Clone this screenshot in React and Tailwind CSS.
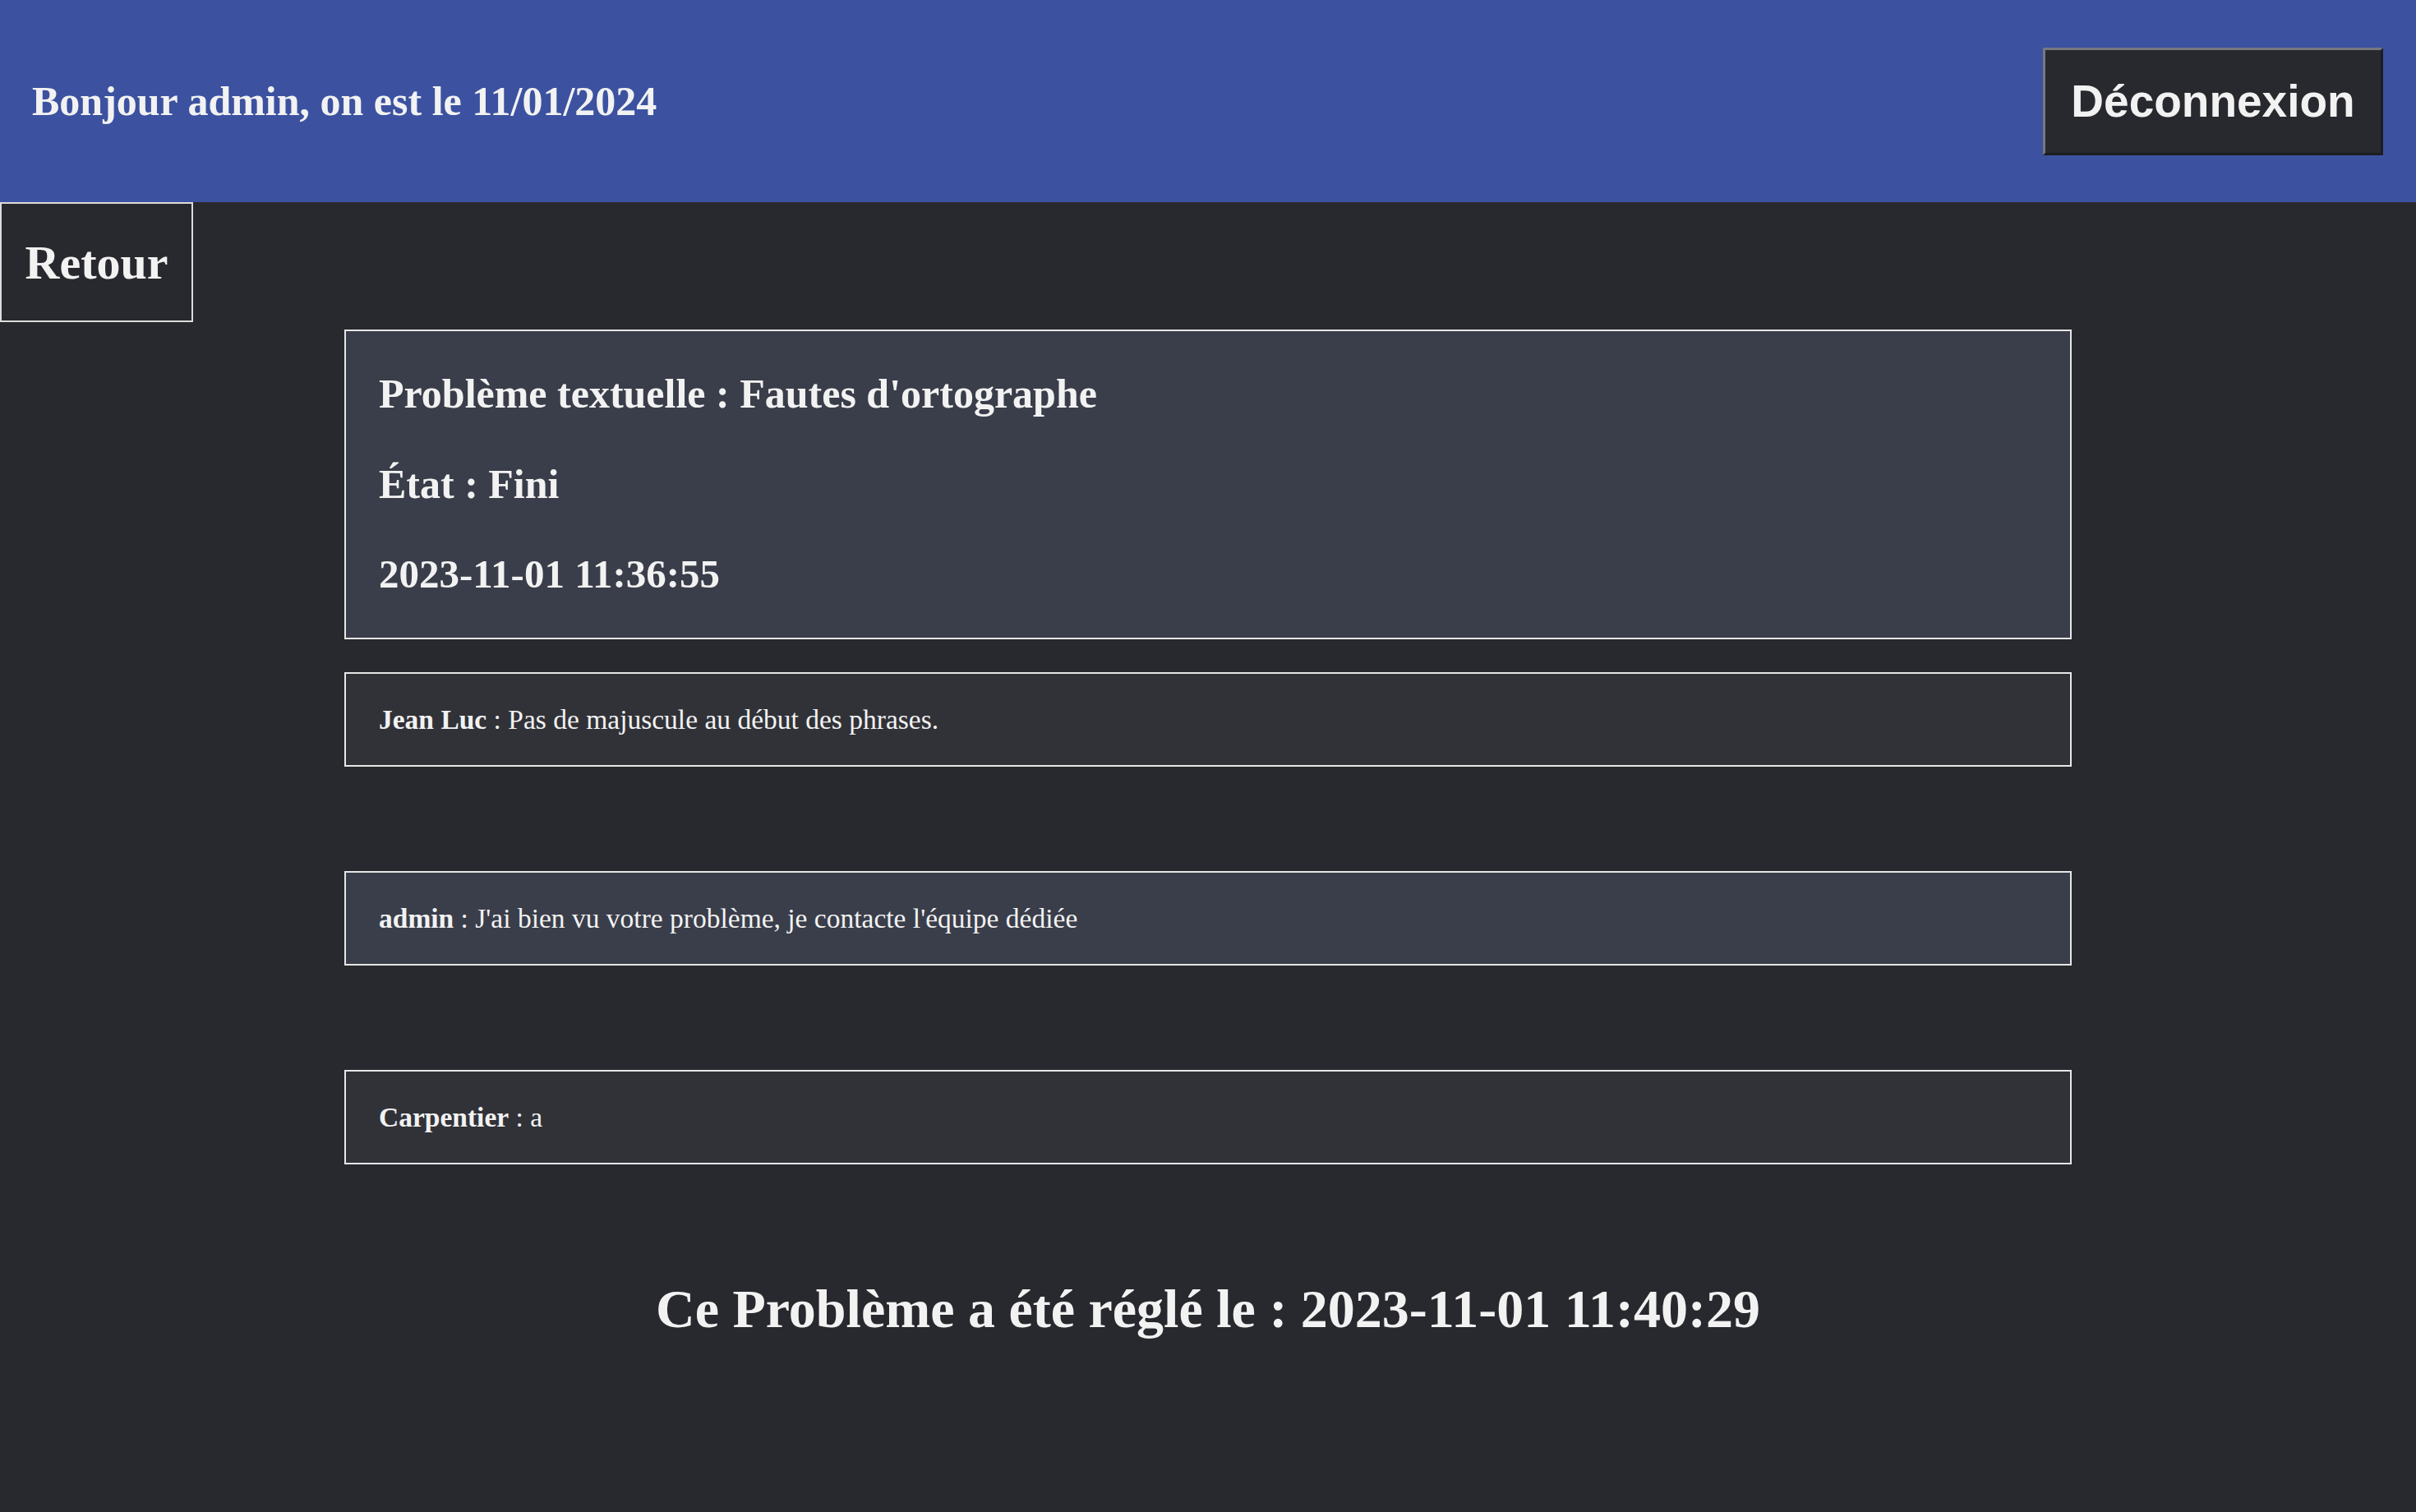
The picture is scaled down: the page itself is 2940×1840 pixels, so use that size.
import React from 'react';

// Comment list for the problem
const comments = [
    { author: 'Jean Luc', text: 'Pas de majuscule au début des phrases.', bg: 'bg-[#313238]' },
    { author: 'admin', text: "J'ai bien vu votre problème, je contacte l'équipe dédiée", bg: 'bg-[#3a3e4a]' },
    { author: 'Carpentier', text: 'a', bg: 'bg-[#313238]' },
];

function Header() {
    return (
        <header className="h-[246px] bg-[#3c52a0] flex items-center justify-between pl-[39px] pr-[40px]">
            <h2 className="text-[50px] font-bold leading-none">Bonjour admin, on est le 11/01/2024</h2>
            <button
                type="button"
                className="h-[131px] w-[414px] flex items-center justify-center bg-[#28292e] border-[3px] border-t-[#77787d] border-l-[#77787d] border-b-[#1c1d20] border-r-[#1c1d20] font-['Liberation_Sans',Arial,sans-serif] font-bold text-[55px] text-[#f2f2f2]"
            >
                Déconnexion
            </button>
        </header>
    );
}

function App() {
    return (
        <div className="min-h-screen bg-[#28292e] text-[#f2f2f2] font-['Liberation_Serif','Times_New_Roman',serif]">
            <Header />

            {/* Back button */}
            <div>
                <button
                    type="button"
                    className="h-[146px] w-[235px] flex items-center justify-center border-2 border-[#dcdcdc] bg-[#28292e] text-[58px] font-bold"
                >
                    Retour
                </button>
            </div>

            <main className="w-[2102px] mx-auto mt-[9px] flex flex-col">
                {/* Problem card */}
                <section className="border-2 border-[#e6e6e6] bg-[#3a3e4a] px-[40px] pt-[46px] pb-[47px] flex flex-col gap-[50px]">
                    <h2 className="text-[50px] font-bold leading-[60px]">Problème textuelle : Fautes d'ortographe</h2>
                    <h2 className="text-[50px] font-bold leading-[60px]">État : Fini</h2>
                    <h2 className="text-[49px] font-bold leading-[60px]">2023-11-01 11:36:55</h2>
                </section>

                {/* Comments */}
                <div className="mt-[40px] flex flex-col gap-[127px]">
                    {comments.map((c) => (
                        <div key={c.author} className={`h-[115px] border-2 border-[#e6e6e6] ${c.bg} px-[40px] flex items-center`}>
                            <p className="text-[33.5px] leading-[40px]">
                                <span className="font-bold">{c.author}</span> : {c.text}
                            </p>
                        </div>
                    ))}
                </div>

                <h1 className="mt-[137px] text-center text-[66px] font-bold leading-[78px]">
                    Ce Problème a été réglé le : 2023-11-01 11:40:29
                </h1>
            </main>
        </div>
    );
}

export default App;
